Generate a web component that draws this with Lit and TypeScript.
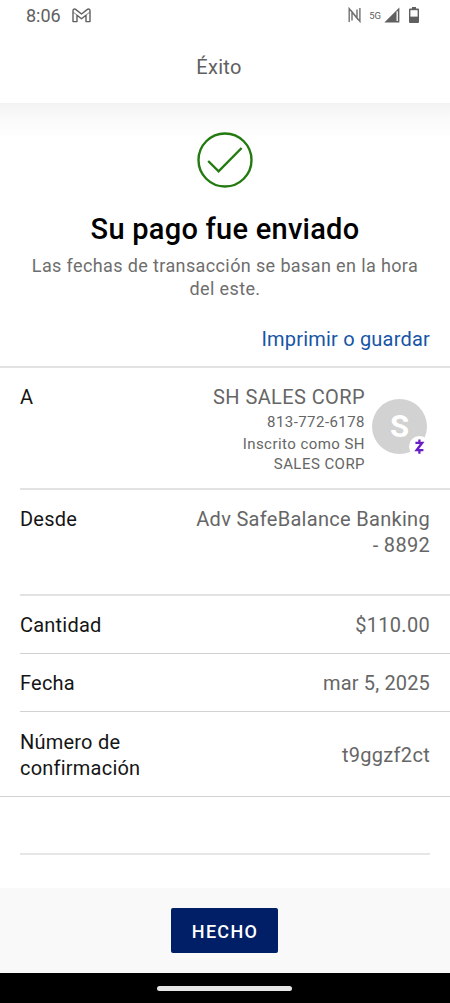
import { LitElement, html, css } from "lit";
import { customElement } from "lit/decorators.js";

@customElement("status-bar")
class StatusBar extends LitElement {
  static styles = css`
    :host { display: flex; justify-content: space-between; height: 31px; padding: 0 31px 0 26px; color: #606060; box-sizing: border-box; }
    .left, .right { display: flex; align-items: center; height: 30px; }
    .time { font-size: 18px; line-height: 30px; letter-spacing: 0; margin-right: 11px; padding-top: 1px; }
    .net { font-size: 9.5px; line-height: 30px; padding-top: 2px; margin: 0 3px 0 8px; letter-spacing: 0; }
    .batt { margin-left: 9px; }
    svg { display: block; }
  `;
  render() {
    return html`
      <div class="left">
        <span class="time">8:06</span>
        <svg width="19" height="15" viewBox="0 0 19 15" fill="none" stroke="#606060" stroke-width="1.4" stroke-linejoin="round">
          <path d="M1 13.6V2.6C1 .9 2.6.6 3.6 1.4L9.5 6 15.4 1.4C16.4.6 18 .9 18 2.6V13.6H14V7.2L9.5 10.8 5 7.2V13.6Z"/>
          <path d="M5 7.2L1.2 4M14 7.2L17.8 4" stroke-width=".8"/>
        </svg>
      </div>
      <div class="right">
        <svg width="13" height="16" viewBox="0 0 13 16" fill="none" stroke="#707070">
          <path d="M1.2 15V1.6L9 11.2V2.6M11.9 1V14.4L4 4.8V13.4M1.2 1.6L11.9 14.4" stroke-width="1.4"/>
        </svg>
        <span class="net">5G</span>
        <svg width="16" height="16" viewBox="0 0 16 16">
          <path d="M.4 15.4L15.4.4V15.4Z" fill="#606060"/>
          <path d="M13.2 4.2V14" stroke="#fff" stroke-width="1.3"/>
        </svg>
        <svg class="batt" width="10" height="16" viewBox="0 0 10 16">
          <path d="M3 0H7V1.4H9Q10 1.4 10 2.4V15Q10 16 9 16H1Q0 16 0 15V2.4Q0 1.4 1 1.4H3Z" fill="#606060"/>
          <rect x="1.4" y="3.2" width="7.2" height="6.4" fill="#fff"/>
        </svg>
      </div>`;
  }
}

@customElement("detail-row")
class DetailRow extends LitElement {
  static styles = css`
    :host { display: flex; justify-content: space-between; box-sizing: border-box; margin-left: 20px; padding: 16px 20px 0 0; border-bottom: 2px solid #e2e2e2; font-size: 20px; line-height: 26px; letter-spacing: 0.3px; color: #666; }
    .label { color: #151515; letter-spacing: 0.22px; }
    .value { text-align: right; }
  `;
  render() {
    return html`<div class="label"><slot name="label"></slot></div><div class="value"><slot></slot></div>`;
  }
}

@customElement("app-root")
class AppRoot extends LitElement {
  static styles = css`
    :host { display: flex; flex-direction: column; width: 450px; height: 1003px; background: #fff; font-family: Roboto, sans-serif; overflow: hidden; }
    .header { height: 72px; box-sizing: border-box; padding: 22px 12px 0 0; text-align: center; font-size: 20px; line-height: 28px; letter-spacing: 0.3px; color: #606060; }
    .body { display: flex; flex-direction: column; flex: 1; background: linear-gradient(#f3f3f3, #fafafa 14px, #fdfdfd 30px, #fff 34px); }
    .check { align-self: center; display: block; margin-top: 29px; }
    h1 { margin: 23px 0 0; text-align: center; font-size: 29px; font-weight: 500; line-height: 36px; letter-spacing: 0.26px; color: #000; }
    .note { margin: 8px 0 0; text-align: center; font-size: 18px; line-height: 22.6px; letter-spacing: 0.38px; color: #6e6e6e; }
    .link { margin: 25px 20px 0 0; text-align: right; font-size: 20px; line-height: 28px; letter-spacing: 0.2px; color: #1755a6; }
    .details { margin-top: 13px; border-top: 2px solid #e2e2e2; }
    .to { height: 122px; letter-spacing: 0.4px; }
    .from { height: 106px; }
    .amount { height: 58px; border-bottom: 1px solid #d2d2d2; }
    .date { height: 58px; border-bottom: 1px solid #d2d2d2; letter-spacing: 0.15px; }
    .conf { height: 85px; margin-left: 0; padding: 17px 20px 0; border-bottom: 1px solid #d2d2d2; }
    .conf .code { display: block; padding-top: 13px; }
    .blank { height: 56px; margin: 0 20px; border-bottom: 2px solid #e6e6e6; }
    .payee { display: flex; gap: 7px; margin-right: 3px; }
    .sub { font-size: 15px; line-height: 20px; letter-spacing: 0.45px; }
    .phone { line-height: 24px; }
    .avatar { position: relative; display: flex; align-items: center; justify-content: center; width: 55px; height: 55px; margin-top: 15px; border-radius: 50%; background: #d2d2d2; color: #fff; font-size: 31px; font-weight: 700; letter-spacing: 0; }
    .badge { position: absolute; right: -3px; bottom: -3px; }
    .footer { display: flex; justify-content: center; height: 85px; padding: 20px 1px 0 0; box-sizing: border-box; background: #f9f9f9; }
    button { width: 107px; height: 45px; border: 0; border-radius: 2px; padding: 1px 0 0 1px; background: #001f66; color: #fff; font: 500 18px Roboto, sans-serif; letter-spacing: 1.3px; }
    .nav { display: flex; justify-content: center; height: 30px; background: #000; }
    .pill { width: 135px; height: 5px; margin: 13px 1px 0 0; border-radius: 3px; background: #e6e6e6; }
  `;
  render() {
    return html`
      <status-bar></status-bar>
      <div class="header">Éxito</div>
      <div class="body">
        <svg class="check" width="56" height="56" viewBox="0 0 56 56" fill="none" stroke="#237a10">
          <circle cx="28" cy="28" r="26.5" stroke-width="2.4"/>
          <path d="M11.2 29L21.6 39.4 44.6 16" stroke-width="2.4"/>
        </svg>
        <h1>Su pago fue enviado</h1>
        <p class="note">Las fechas de transacción se basan en la hora<br>del este.</p>
        <div class="link">Imprimir o guardar</div>
        <div class="details">
          <detail-row class="to">
            <span slot="label">A</span>
            <div class="payee">
              <div>
                <div class="name">SH SALES CORP</div>
                <div class="sub phone">813-772-6178</div>
                <div class="sub">Inscrito como SH<br>SALES CORP</div>
              </div>
              <div class="avatar">S
                <svg class="badge" width="21" height="21" viewBox="0 0 21 21">
                  <circle cx="10.5" cy="10.5" r="10.5" fill="#fff"/>
                  <path d="M6.4 6.8H13.2L7.6 14.2H14.4M10.4 3.4V6.8M10.4 14.2V17.8" fill="none" stroke="#6a1fc4" stroke-width="2.3"/>
                </svg>
              </div>
            </div>
          </detail-row>
          <detail-row class="from"><span slot="label">Desde</span>Adv SafeBalance Banking<br>- 8892</detail-row>
          <detail-row class="amount"><span slot="label">Cantidad</span>$110.00</detail-row>
          <detail-row class="date"><span slot="label">Fecha</span>mar 5, 2025</detail-row>
          <detail-row class="conf"><span slot="label">Número de<br>confirmación</span><span class="code">t9ggzf2ct</span></detail-row>
          <div class="blank"></div>
        </div>
      </div>
      <div class="footer"><button>HECHO</button></div>
      <div class="nav"><div class="pill"></div></div>`;
  }
}
